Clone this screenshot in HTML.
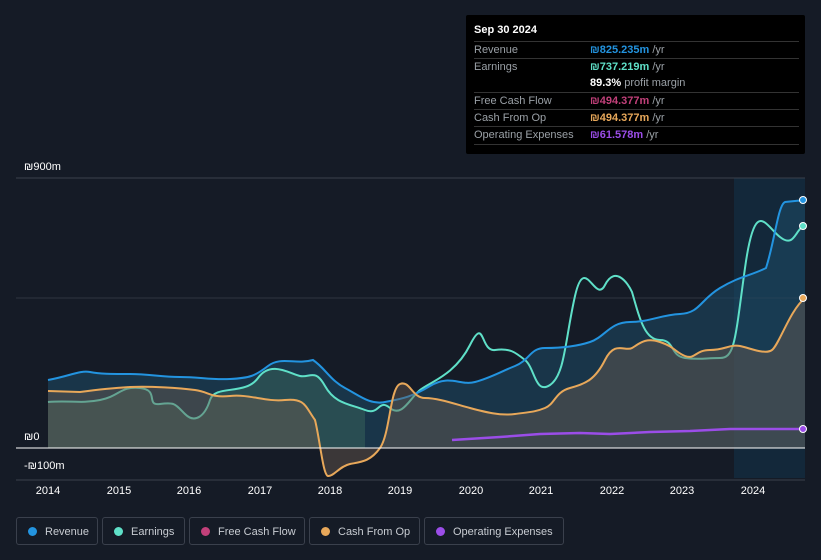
<!DOCTYPE html><html><head><style>
body{margin:0;width:821px;height:560px;background:#151b26;font-family:"Liberation Sans",sans-serif;overflow:hidden;position:relative;color:#fff}
.tt{position:absolute;left:466px;top:15px;width:339px;height:139px;background:#000;border-radius:2px}
.tt .h{position:absolute;left:8px;top:9px;font-size:11px;font-weight:bold}
.row{position:absolute;left:8px;width:325px;height:17px;border-top:1px solid #333;font-size:11px;color:#9aa0a6;line-height:17px}
.row span{position:absolute;left:116px}
.row b{font-weight:bold}
.yl{position:absolute;font-size:11px;color:#fff;left:24px}
.xl{position:absolute;top:485px;font-size:11px;color:#fff;width:40px;text-align:center}
.lg{position:absolute;top:517px;height:28px;border:1px solid #3a404c;border-radius:3px;font-size:11px;color:#c8ccd2;line-height:28px;box-sizing:border-box;padding-left:28px}
.lg i{position:absolute;left:11px;top:9px;width:9px;height:9px;border-radius:50%}
</style></head><body>
<svg width="821" height="560" style="position:absolute;left:0;top:0">
<rect x="734" y="178" width="71" height="300" fill="#13283a"/>
<line x1="16" y1="178" x2="805" y2="178" stroke="#3a404c"/>
<line x1="16" y1="298" x2="805" y2="298" stroke="#2e3440"/>
<path d="M48 380 C70 376 80 370 90 372 S110 374 130 374 S160 377 180 377 S210 380 230 379 S255 376 268 366 S295 365 313 360 C325 368 330 380 345 388 S370 405 385 402 S410 398 430 386 S460 386 475 382 S500 372 515 366 S530 348 545 348 S575 347 590 342 S610 322 630 322 S660 315 680 314 S700 300 720 288 S750 276 766 268 C775 240 778 205 785 202 L805 200 L805 448 L48 448Z" fill="#1d4a66" opacity=".55"/>
<path d="M48 402 C70 400 80 404 100 400 S120 386 140 388 S145 406 160 404 S175 404 185 414 S205 416 210 400 S245 396 258 378 S290 374 300 376 S315 368 325 386 S350 404 365 410 L365 448 L48 448Z" fill="#3d6a5e" opacity=".45"/>
<path d="M48 402 C70 400 80 404 100 400 S120 386 140 388 S145 406 160 404 S175 404 185 414 S205 416 210 400 S245 396 258 378 S290 374 300 376 S315 368 325 386 S350 404 365 410 S378 398 390 408 S410 398 420 390 S455 375 470 345 S480 352 495 350 S515 352 525 360 S535 395 550 385 S565 340 575 296 S595 305 605 285 S628 283 632 292 C640 320 645 340 660 340 S670 356 685 358 S705 358 720 358 S735 340 745 268 S765 225 780 237 S795 228 805 226" fill="none" stroke="#5fe0c8" stroke-width="2"/>
<path d="M48 380 C70 376 80 370 90 372 S110 374 130 374 S160 377 180 377 S210 380 230 379 S255 376 268 366 S295 365 313 360 C325 368 330 380 345 388 S370 405 385 402 S410 398 430 386 S460 386 475 382 S500 372 515 366 S530 348 545 348 S575 347 590 342 S610 322 630 322 S660 315 680 314 S700 300 720 288 S750 276 766 268 C775 240 778 205 785 202 L805 200" fill="none" stroke="#2394e0" stroke-width="2"/>
<path d="M48 391 L80 392 S110 388 130 387 S180 388 195 390 S210 398 230 396 S265 402 285 400 S305 406 315 420 C320 440 323 475 328 476 S340 466 350 464 S370 462 380 448 S390 388 400 384 S412 398 425 398 S455 404 470 408 S500 416 515 414 S535 412 545 408 S555 392 570 388 S595 380 605 360 S625 352 632 348 S645 337 660 342 S675 352 685 356 S695 350 710 350 S730 344 740 346 S765 355 772 350 S790 310 805 298 L805 448 L48 448Z" fill="#6b5a50" opacity=".45"/>
<path d="M48 391 L80 392 S110 388 130 387 S180 388 195 390 S210 398 230 396 S265 402 285 400 S305 406 315 420 C320 440 323 475 328 476 S340 466 350 464 S370 462 380 448 S390 388 400 384 S412 398 425 398 S455 404 470 408 S500 416 515 414 S535 412 545 408 S555 392 570 388 S595 380 605 360 S625 352 632 348 S645 337 660 342 S675 352 685 356 S695 350 710 350 S730 344 740 346 S765 355 772 350 S790 310 805 298" fill="none" stroke="#e8a85a" stroke-width="2"/>
<path d="M452 440 L500 437 L540 434 L580 433 L610 434 L650 432 L690 431 L730 429 L805 429" fill="none" stroke="#9b4de8" stroke-width="2.5"/>
<line x1="16" y1="448" x2="805" y2="448" stroke="#fff"/>
<line x1="16" y1="480" x2="805" y2="480" stroke="#3a404c"/>
<circle cx="803" cy="200" r="3.5" fill="#2394e0" stroke="#fff"/>
<circle cx="803" cy="226" r="3.5" fill="#5fe0c8" stroke="#fff"/>
<circle cx="803" cy="298" r="3.5" fill="#e8a85a" stroke="#fff"/>
<circle cx="803" cy="429" r="3.5" fill="#9b4de8" stroke="#fff"/>
</svg>
<div class="yl" style="top:161px">₪900m</div>
<div class="yl" style="top:431px">₪0</div>
<div class="yl" style="top:460px">-₪100m</div>
<div class="xl" style="left:28px">2014</div><div class="xl" style="left:99px">2015</div><div class="xl" style="left:169px">2016</div><div class="xl" style="left:240px">2017</div><div class="xl" style="left:310px">2018</div><div class="xl" style="left:380px">2019</div><div class="xl" style="left:451px">2020</div><div class="xl" style="left:521px">2021</div><div class="xl" style="left:592px">2022</div><div class="xl" style="left:662px">2023</div><div class="xl" style="left:733px">2024</div>
<div class="tt"><div class="h">Sep 30 2024</div>
<div class="row" style="top:26px">Revenue<span><b style="color:#2394e0">₪825.235m</b> /yr</span></div>
<div class="row" style="top:43px">Earnings<span><b style="color:#5fe0c8">₪737.219m</b> /yr</span></div>
<div class="row" style="top:60px;border-top:none"><span><b style="color:#fff">89.3%</b> profit margin</span></div>
<div class="row" style="top:77px">Free Cash Flow<span><b style="color:#c2407a">₪494.377m</b> /yr</span></div>
<div class="row" style="top:94px">Cash From Op<span><b style="color:#e8a85a">₪494.377m</b> /yr</span></div>
<div class="row" style="top:111px;border-bottom:1px solid #333">Operating Expenses<span><b style="color:#9b4de8">₪61.578m</b> /yr</span></div>
</div>
<div class="lg" style="left:16px;width:82px"><i style="background:#2394e0"></i>Revenue</div>
<div class="lg" style="left:102px;width:83px"><i style="background:#5fe0c8"></i>Earnings</div>
<div class="lg" style="left:189px;width:116px"><i style="background:#c2407a"></i>Free Cash Flow</div>
<div class="lg" style="left:309px;width:111px"><i style="background:#e8a85a"></i>Cash From Op</div>
<div class="lg" style="left:424px;width:140px"><i style="background:#9b4de8"></i>Operating Expenses</div>
</body></html>
